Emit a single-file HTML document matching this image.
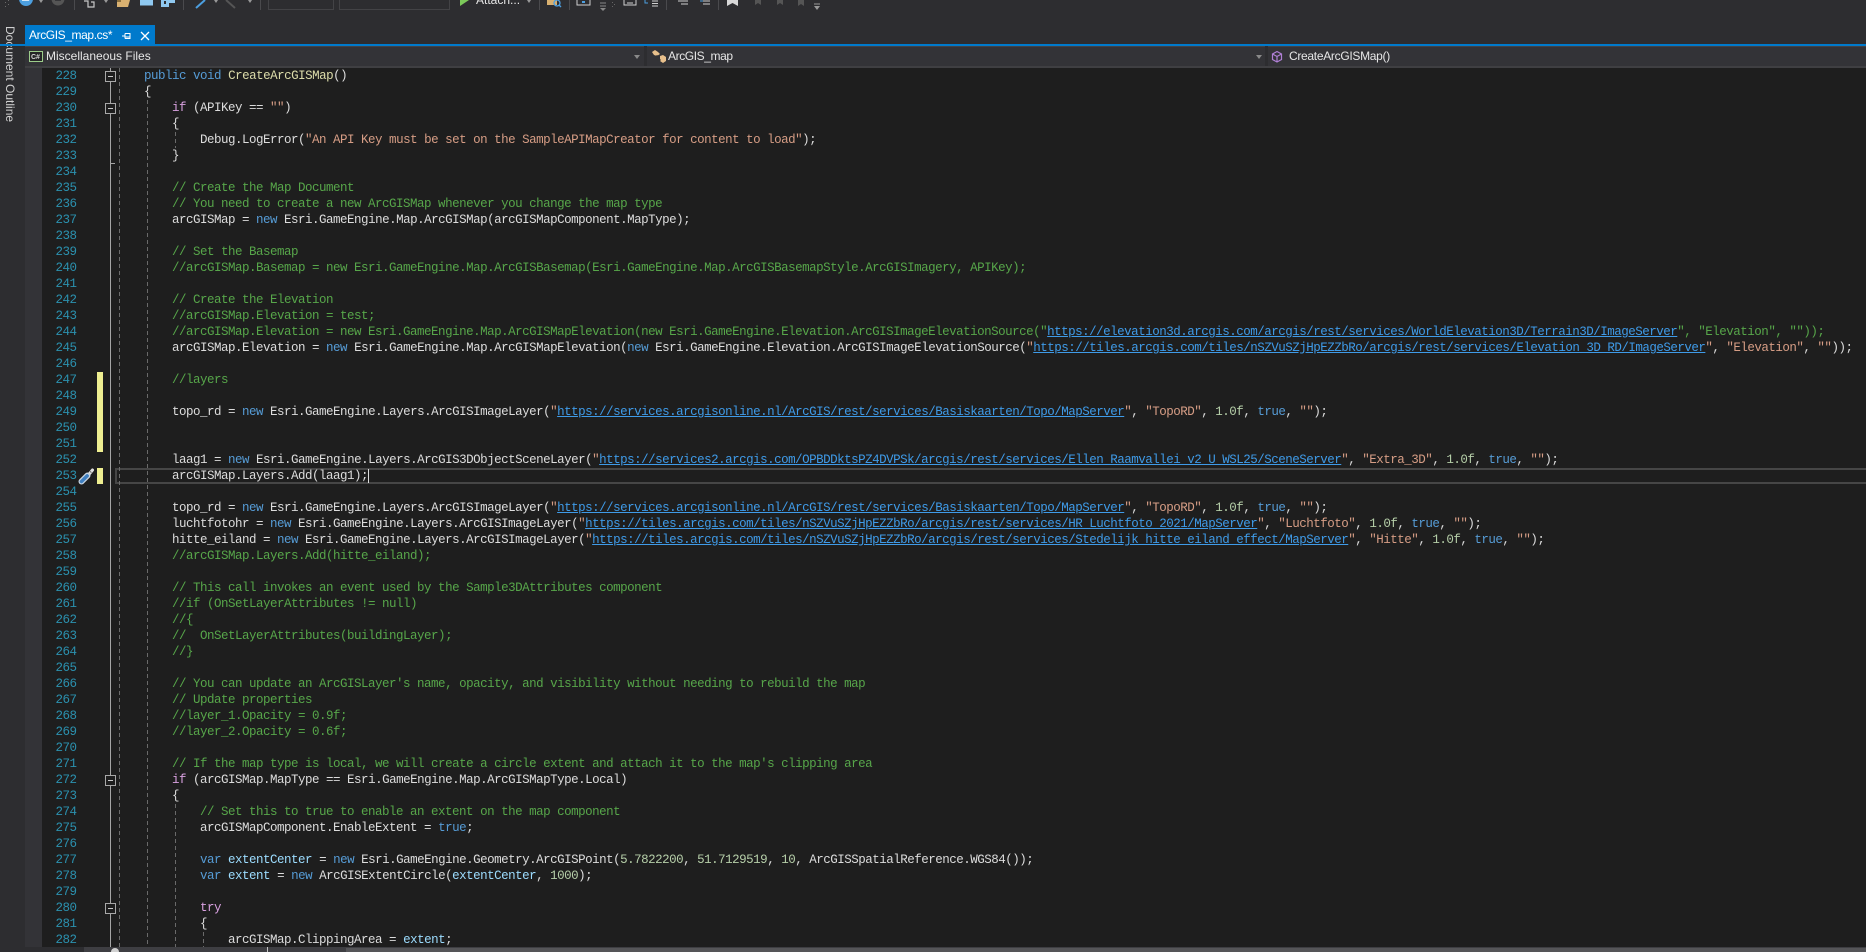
<!DOCTYPE html>
<html lang="en"><head><meta charset="utf-8"><title>ArcGIS_map.cs</title>
<style>
html,body{margin:0;padding:0;background:#2d2d30}
#root{position:relative;width:1866px;height:952px;overflow:hidden;background:#2d2d30;font-family:"Liberation Sans",sans-serif}
.a{position:absolute}
pre{margin:0;font-family:"Liberation Mono",monospace;font-size:12.5px;letter-spacing:-0.5px;line-height:16px;white-space:pre}
#code{left:116px;top:68px;color:#dcdcdc}
#nums{left:40px;top:68px;width:36.5px;text-align:right;color:#2b91af}
.k{color:#569cd6}.c{color:#d8a0df}.s{color:#d69d85}.g{color:#57a64a}.n{color:#b5cea8}.m{color:#dcdcaa}.v{color:#9cdcfe}
.u{color:#3f9be8;text-decoration:underline;text-underline-offset:1px}
.dash{width:1px;background:repeating-linear-gradient(to bottom,#6a6a6a 0 4px,transparent 4px 7px)}
.fold{width:9px;height:9px;border:1px solid #a8a8a8;background:#1e1e1e;left:105px}
.fold:after{content:"";position:absolute;left:2px;top:4px;width:5px;height:1px;background:#c8c8c8}
.dd{top:46px;height:20px;background:#333337;border-top:1px solid #434346}
.ddt{top:47px;height:19px;line-height:19px;font-size:12px;color:#e6e6e6;white-space:nowrap}
.arr{width:0;height:0;border-left:3.5px solid transparent;border-right:3.5px solid transparent;border-top:4px solid #8a8a8a}
.sep{top:0;width:1px;height:10px;background:#4a4a4d}
.tarr{width:0;height:0;border-left:2.5px solid transparent;border-right:2.5px solid transparent;border-top:3px solid #999}
</style></head>
<body><div id="root">

<!-- toolbar -->
<svg class="a" style="left:0;top:0" width="840" height="14" viewBox="0 0 840 14">
  <g fill="#6a6a6a"><rect x="5" y="2" width="1" height="1"/><rect x="8" y="4" width="1" height="1"/><rect x="5" y="6" width="1" height="1"/><rect x="8" y="0" width="1" height="1"/></g>
  <circle cx="26" cy="-1" r="7" fill="#4c9fe0"/><path d="M22 0h6l-2-3" stroke="#fff" stroke-width="1.5" fill="none"/>
  <circle cx="58" cy="-1" r="6.5" fill="#555"/><path d="M55 0h6" stroke="#2d2d30" stroke-width="1.5"/>
  <path d="M84 1h4v6h6V2h-3" stroke="#c8c8c8" stroke-width="1.2" fill="none"/>
  <path d="M117 0h13l-2 7h-11z" fill="#d8b070"/><path d="M117 0h4v2h-4z" fill="#8a6e3c"/>
  <rect x="140" y="0" width="13" height="5.5" fill="#8fc8f0"/>
  <rect x="161" y="0" width="8" height="7" fill="#8fc8f0"/><rect x="169" y="0" width="6" height="3" fill="#8fc8f0"/><rect x="164" y="1" width="2" height="3" fill="#2d2d30"/>
  <path d="M196 8l9-8" stroke="#4c9fe0" stroke-width="2"/>
  <path d="M226 0l9 8" stroke="#555" stroke-width="2"/>
  <path d="M460 0h3l6 0-9 6z" fill="#7cc95a"/>
  <path d="M547 0h10v5h-10z" fill="#d8b070"/><circle cx="557" cy="3" r="3" fill="none" stroke="#4c9fe0" stroke-width="1.3"/><path d="M559 5l2 2" stroke="#4c9fe0" stroke-width="1.3"/>
  <path d="M577 0v5h13V0" stroke="#d0d0d0" fill="none"/><path d="M582 1h3v2h-3z" fill="#4c9fe0"/>
  <path d="M600 3h6M600 6h6" stroke="#888"/><path d="M600 8h6l-3 3z" fill="#888"/>
  <g fill="#666"><rect x="612" y="2" width="1" height="1"/><rect x="614" y="4" width="1" height="1"/><rect x="612" y="6" width="1" height="1"/></g>
  <path d="M624 0v5h12V0" stroke="#d0d0d0" fill="none"/><path d="M627 3h6" stroke="#d0d0d0"/>
  <path d="M645 0v3h3" stroke="#4c9fe0" fill="none"/><path d="M652 1h6M652 3.500h6M652 6h6" stroke="#d0d0d0"/>
  <path d="M678 1h10M681 4h7" stroke="#d0d0d0"/>
  <path d="M700 1h3" stroke="#4c9fe0"/><path d="M703 1h7M703 4h7" stroke="#d0d0d0"/>
  <path d="M727 0h11v6l-5.500-3-5.500 3z" fill="#d8d8d8"/>
  <path d="M755 0h6v5l-3-2-3 2z" fill="#555"/><path d="M777 0h6v5l-3-2-3 2z" fill="#555"/><path d="M798 0h6v6l-3-2-3 2z" fill="#555"/>
  <path d="M814 4h6" stroke="#999"/><path d="M814 6h6l-3 4z" fill="#999"/>
</svg>
<div class="a sep" style="left:74px"></div><div class="a sep" style="left:183px"></div><div class="a sep" style="left:260px"></div>
<div class="a sep" style="left:539px"></div><div class="a sep" style="left:569px"></div><div class="a sep" style="left:666px"></div><div class="a sep" style="left:718px"></div>
<div class="a tarr" style="left:39px;top:0"></div><div class="a tarr" style="left:104px;top:0"></div><div class="a tarr" style="left:214px;top:0"></div><div class="a tarr" style="left:248px;top:0"></div><div class="a tarr" style="left:527px;top:0"></div>
<div class="a" style="left:268px;top:-2px;width:64px;height:10px;border:1px solid #434346"></div>
<div class="a" style="left:339px;top:-2px;width:109px;height:10px;border:1px solid #434346"></div>
<div class="a" style="left:476px;top:-7px;font-size:12px;line-height:14px;color:#e6e6e6">Attach...</div>

<!-- left tool strip -->
<div class="a" style="left:3px;top:26px;writing-mode:vertical-rl;font-size:12px;line-height:14px;color:#d0d0d0;white-space:nowrap">Document Outline</div>

<!-- tab -->
<div class="a" style="left:25px;top:25px;width:130px;height:19px;background:#007acc"></div>
<div class="a" style="left:29px;top:26px;font-size:12px;letter-spacing:-.4px;line-height:19px;color:#fff;white-space:nowrap">ArcGIS_map.cs*</div>
<svg class="a" style="left:120px;top:30px" width="32" height="12" viewBox="0 0 32 12"><path d="M2 6h3M5 3.500v5M5 3.500h5v5H5M5 7h5" stroke="#fff" fill="none"/><path d="M21 2l8 8M29 2l-8 8" stroke="#fff" stroke-width="1.300" fill="none"/></svg>
<div class="a" style="left:0;top:44px;width:1866px;height:2px;background:#007acc"></div>

<!-- nav bar -->
<div class="a dd" style="left:25px;width:619px"></div>
<div class="a dd" style="left:647px;width:618px"></div>
<div class="a dd" style="left:1268px;width:598px"></div>
<div class="a" style="left:25px;top:66px;width:1841px;height:2px;background:#3f3f42"></div>
<svg class="a" style="left:29px;top:51px" width="14" height="11" viewBox="0 0 14 11"><rect x=".5" y=".5" width="13" height="10" fill="#252526" stroke="#9ccc8a"/><text x="2" y="8" font-family="Liberation Sans,sans-serif" font-size="7" font-weight="bold" fill="#d8d8d8">C#</text></svg>
<div class="a ddt" style="left:46px">Miscellaneous Files</div>
<div class="a arr" style="left:634px;top:55px"></div>
<svg class="a" style="left:651px;top:49px" width="16" height="15" viewBox="0 0 16 15"><path d="M1 3l3-2 3 2 2 2-3 2-3-1zM9 7l3-1 3 2v4l-3 2-3-2z" fill="#e8c08c"/><path d="M6 6v5h4" stroke="#333" fill="none" stroke-width="1"/></svg>
<div class="a ddt" style="left:668px;letter-spacing:-.4px">ArcGIS_map</div>
<div class="a arr" style="left:1256px;top:55px"></div>
<svg class="a" style="left:1271px;top:50px" width="12" height="14" viewBox="0 0 12 14"><path d="M6 1.500l4.500 2.500v5.500L6 12 1.500 9.500V4zM1.500 4L6 6.500 10.500 4M6 6.500V12" stroke="#b180d7" stroke-width="1.200" fill="none"/></svg>
<div class="a ddt" style="left:1289px;letter-spacing:-.3px">CreateArcGISMap()</div>

<!-- editor -->
<div class="a" style="left:25px;top:68px;width:17px;height:879px;background:#333337"></div>
<div class="a" style="left:42px;top:68px;width:1824px;height:879px;background:#1e1e1e"></div>

<!-- change marks -->
<div class="a" style="left:97px;top:372px;width:6px;height:80px;background:#efef91"></div>
<div class="a" style="left:97px;top:468px;width:6px;height:16px;background:#efef91"></div>

<!-- current line -->
<div class="a" style="left:115px;top:468px;width:1751px;height:12px;border:2px solid #464646;border-right:0"></div>

<!-- outlining -->
<div class="a" style="left:110px;top:68px;width:1px;height:879px;background:#a5a5a5"></div>
<div class="a" style="left:110px;top:163px;width:5px;height:1px;background:#a5a5a5"></div>
<div class="a fold" style="top:71px"></div>
<div class="a fold" style="top:103px"></div>
<div class="a fold" style="top:775px"></div>
<div class="a fold" style="top:903px"></div>

<div class="a dash" style="left:119px;top:68px;height:879px"></div>
<div class="a dash" style="left:147px;top:100px;height:847px"></div>
<div class="a dash" style="left:175px;top:132px;height:16px"></div>
<div class="a dash" style="left:175px;top:804px;height:143px"></div>
<div class="a dash" style="left:203px;top:932px;height:15px"></div>

<pre class="a" id="nums">228
229
230
231
232
233
234
235
236
237
238
239
240
241
242
243
244
245
246
247
248
249
250
251
252
253
254
255
256
257
258
259
260
261
262
263
264
265
266
267
268
269
270
271
272
273
274
275
276
277
278
279
280
281
282</pre>

<pre class="a" id="code">    <span class="k">public</span> <span class="k">void</span> <span class="m">CreateArcGISMap</span>()
    {
        <span class="c">if</span> (APIKey == <span class="s">""</span>)
        {
            Debug.LogError(<span class="s">"An API Key must be set on the SampleAPIMapCreator for content to load"</span>);
        }

        <span class="g">// Create the Map Document</span>
        <span class="g">// You need to create a new ArcGISMap whenever you change the map type</span>
        arcGISMap = <span class="k">new</span> Esri.GameEngine.Map.ArcGISMap(arcGISMapComponent.MapType);

        <span class="g">// Set the Basemap</span>
        <span class="g">//arcGISMap.Basemap = new Esri.GameEngine.Map.ArcGISBasemap(Esri.GameEngine.Map.ArcGISBasemapStyle.ArcGISImagery, APIKey);</span>

        <span class="g">// Create the Elevation</span>
        <span class="g">//arcGISMap.Elevation = test;</span>
        <span class="g">//arcGISMap.Elevation = new Esri.GameEngine.Map.ArcGISMapElevation(new Esri.GameEngine.Elevation.ArcGISImageElevationSource("</span><span class="u">https://elevation3d.arcgis.com/arcgis/rest/services/WorldElevation3D/Terrain3D/ImageServer</span><span class="g">", "Elevation", ""));</span>
        arcGISMap.Elevation = <span class="k">new</span> Esri.GameEngine.Map.ArcGISMapElevation(<span class="k">new</span> Esri.GameEngine.Elevation.ArcGISImageElevationSource(<span class="s">"</span><span class="u">https://tiles.arcgis.com/tiles/nSZVuSZjHpEZZbRo/arcgis/rest/services/Elevation_3D_RD/ImageServer</span><span class="s">"</span>, <span class="s">"Elevation"</span>, <span class="s">""</span>));

        <span class="g">//layers</span>

        topo_rd = <span class="k">new</span> Esri.GameEngine.Layers.ArcGISImageLayer(<span class="s">"</span><span class="u">https://services.arcgisonline.nl/ArcGIS/rest/services/Basiskaarten/Topo/MapServer</span><span class="s">"</span>, <span class="s">"TopoRD"</span>, <span class="n">1.0f</span>, <span class="k">true</span>, <span class="s">""</span>);


        laag1 = <span class="k">new</span> Esri.GameEngine.Layers.ArcGIS3DObjectSceneLayer(<span class="s">"</span><span class="u">https://services2.arcgis.com/OPBDDktsPZ4DVPSk/arcgis/rest/services/Ellen_Raamvallei_v2_U_WSL25/SceneServer</span><span class="s">"</span>, <span class="s">"Extra_3D"</span>, <span class="n">1.0f</span>, <span class="k">true</span>, <span class="s">""</span>);
        arcGISMap.Layers.Add(laag1);

        topo_rd = <span class="k">new</span> Esri.GameEngine.Layers.ArcGISImageLayer(<span class="s">"</span><span class="u">https://services.arcgisonline.nl/ArcGIS/rest/services/Basiskaarten/Topo/MapServer</span><span class="s">"</span>, <span class="s">"TopoRD"</span>, <span class="n">1.0f</span>, <span class="k">true</span>, <span class="s">""</span>);
        luchtfotohr = <span class="k">new</span> Esri.GameEngine.Layers.ArcGISImageLayer(<span class="s">"</span><span class="u">https://tiles.arcgis.com/tiles/nSZVuSZjHpEZZbRo/arcgis/rest/services/HR_Luchtfoto_2021/MapServer</span><span class="s">"</span>, <span class="s">"Luchtfoto"</span>, <span class="n">1.0f</span>, <span class="k">true</span>, <span class="s">""</span>);
        hitte_eiland = <span class="k">new</span> Esri.GameEngine.Layers.ArcGISImageLayer(<span class="s">"</span><span class="u">https://tiles.arcgis.com/tiles/nSZVuSZjHpEZZbRo/arcgis/rest/services/Stedelijk_hitte_eiland_effect/MapServer</span><span class="s">"</span>, <span class="s">"Hitte"</span>, <span class="n">1.0f</span>, <span class="k">true</span>, <span class="s">""</span>);
        <span class="g">//arcGISMap.Layers.Add(hitte_eiland);</span>

        <span class="g">// This call invokes an event used by the Sample3DAttributes component</span>
        <span class="g">//if (OnSetLayerAttributes != null)</span>
        <span class="g">//{</span>
        <span class="g">//  OnSetLayerAttributes(buildingLayer);</span>
        <span class="g">//}</span>

        <span class="g">// You can update an ArcGISLayer's name, opacity, and visibility without needing to rebuild the map</span>
        <span class="g">// Update properties</span>
        <span class="g">//layer_1.Opacity = 0.9f;</span>
        <span class="g">//layer_2.Opacity = 0.6f;</span>

        <span class="g">// If the map type is local, we will create a circle extent and attach it to the map's clipping area</span>
        <span class="c">if</span> (arcGISMap.MapType == Esri.GameEngine.Map.ArcGISMapType.Local)
        {
            <span class="g">// Set this to true to enable an extent on the map component</span>
            arcGISMapComponent.EnableExtent = <span class="k">true</span>;

            <span class="k">var</span> <span class="v">extentCenter</span> = <span class="k">new</span> Esri.GameEngine.Geometry.ArcGISPoint(<span class="n">5.7822200</span>, <span class="n">51.7129519</span>, <span class="n">10</span>, ArcGISSpatialReference.WGS84());
            <span class="k">var</span> <span class="v">extent</span> = <span class="k">new</span> ArcGISExtentCircle(<span class="v">extentCenter</span>, <span class="n">1000</span>);

            <span class="c">try</span>
            {
                arcGISMap.ClippingArea = <span class="v">extent</span>;</pre>

<!-- caret -->
<div class="a" style="left:368px;top:469px;width:1px;height:14px;background:#dcdcdc"></div>

<!-- screwdriver quick action -->
<svg class="a" style="left:78px;top:468px" width="17" height="17" viewBox="0 0 17 17">
  <path d="M10 7.500L14.500 2" stroke="#e0e0e0" stroke-width="3" stroke-linecap="round" fill="none"/>
  <path d="M12 3.500l1.500 1" stroke="#555" stroke-width="1"/>
  <path d="M3.500 13.500L9.500 7.500" stroke="#c8d4e0" stroke-width="6" stroke-linecap="round" fill="none"/>
  <path d="M3.500 13.500L9.500 7.500" stroke="#3f7fc0" stroke-width="3.500" stroke-linecap="round" stroke-dasharray="2 1" fill="none"/>
</svg>

<!-- bottom strip -->
<div class="a" style="left:25px;top:947px;width:1841px;height:5px;background:#3e3e42"></div>
<div class="a" style="left:25px;top:947px;width:59px;height:5px;background:#2d2d30"></div>
<div class="a" style="left:346px;top:948px;width:1520px;height:4px;background:#555558"></div>
<div class="a" style="left:111px;top:948px;width:8px;height:8px;border-radius:50%;background:#d0d0d0"></div>
<div class="a" style="left:267px;top:947px;width:1px;height:5px;background:#c0c0c0"></div>

</div></body></html>
